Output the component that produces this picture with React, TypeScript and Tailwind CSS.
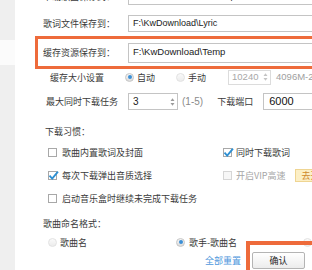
import React from 'react';

const cjk = "font-['Noto_Sans_CJK_SC',sans-serif]";
const lat = "font-['Liberation_Sans','Noto_Sans_CJK_SC',sans-serif]";

function Radio({ on, faint }: { on?: boolean; faint?: boolean }) {
  return (
    <span
      className={`flex h-[9px] w-[9px] shrink-0 items-center justify-center rounded-full border ${
        faint ? 'border-[#e2e2e2] from-[#fafafa] to-[#ececec]' : 'border-[#c6c6c6] from-[#f6f6f6] to-[#dcdcdc]'
      } bg-gradient-to-b`}
    >
      {on && <span className="h-[4px] w-[4px] rounded-full bg-[#3b8fd6]" />}
    </span>
  );
}

function Check({ on, disabled }: { on?: boolean; disabled?: boolean }) {
  return (
    <span
      className={`relative h-[9px] w-[9px] shrink-0 border ${
        disabled ? 'border-[#d6d6d6] bg-[#f7f7f7]' : 'border-[#a8a8a8] bg-white'
      }`}
    >
      {on && (
        <svg className="absolute left-[-1px] top-[-2px]" width="11" height="11" viewBox="0 0 11 11">
          <path d="M1.5 5.6 L4.2 8.6 L10 1.6" stroke="#2d8fd2" strokeWidth="1.8" fill="none" />
        </svg>
      )}
    </span>
  );
}

function Spin({ color }: { color: string }) {
  return (
    <svg width="5" height="10" viewBox="0 0 5 10">
      <path d="M0.5 4 L2.5 1.2 L4.5 4 Z M0.5 6 L2.5 8.8 L4.5 6 Z" fill={color} />
    </svg>
  );
}

const label = `${cjk} text-[9px] leading-none text-[#3a3a3a] whitespace-nowrap`;

export default function App() {
  return (
    <div className="relative flex h-[270px] w-[312px] overflow-hidden bg-white">
      <div className="flex w-[15px] shrink-0 flex-col bg-[#efefef]">
        <div className="h-[40px]" />
        <div className="h-[25px] bg-[#fbfbfb]" />
      </div>

      <div className="mt-[-12px] flex min-w-0 flex-1 flex-col">
        {/* download path */}
        <div className="flex h-[17px] shrink-0 items-center pl-[28px]">
          <span className={`${label} w-[85px] shrink-0`}>下载歌曲保存到：</span>
          <div className={`${lat} flex h-[17px] w-[200px] shrink-0 items-center border border-[#c4c4c4] pl-[4px] text-[9px] text-[#222]`}>
            {'C:\\Users\\Lenovo\\Desktop'}
          </div>
        </div>

        <div className="mt-[10px] flex h-[17px] shrink-0 items-center pl-[28px]">
          <span className={`${label} w-[85px] shrink-0`}>歌词文件保存到：</span>
          <div className={`${lat} flex h-[17px] w-[200px] shrink-0 items-center border border-[#c4c4c4] pl-[4px] text-[9px] text-[#222]`}>
            {'F:\\KwDownload\\Lyric'}
          </div>
        </div>

        {/* highlighted cache row */}
        <div className="ml-[20px] mt-[4px] flex h-[33px] w-[300px] shrink-0 items-center border-[3px] border-[#ee6b3b] pl-[5px]">
          <span className={`${label} w-[85px] shrink-0`}>缓存资源保存到：</span>
          <div className={`${lat} flex h-[20px] w-[200px] shrink-0 items-center border border-[#c4c4c4] pl-[4px] text-[9.5px] text-[#222]`}>
            {'F:\\KwDownload\\Temp'}
          </div>
        </div>

        {/* cache size */}
        <div className="flex h-[16px] shrink-0 items-center pl-[35px]">
          <span className={`${label} w-[75px] shrink-0`}>缓存大小设置</span>
          <Radio on />
          <span className={`${label} ml-[3px]`}>自动</span>
          <span className="ml-[21px]">
            <Radio faint />
          </span>
          <span className={`${label} ml-[3px]`}>手动</span>
          <div className={`${lat} ml-[22px] flex h-[15px] w-[43px] shrink-0 items-center justify-between border border-[#dcdcdc] pl-[3px] pr-[2px] text-[9.5px] text-[#a8a8a8]`}>
            <span>10240</span>
            <Spin color="#c4c4c4" />
          </div>
          <span className={`${lat} ml-[5px] whitespace-nowrap text-[9.5px] text-[#a0a0a0]`}>4096M-20480M</span>
        </div>

        {/* max tasks / port */}
        <div className="mt-[8px] flex h-[17px] shrink-0 items-center pl-[31px]">
          <span className={`${label} w-[82px] shrink-0`}>最大同时下载任务</span>
          <div className={`${lat} flex h-[17px] w-[50px] shrink-0 items-center justify-between border border-[#c4c4c4] pl-[4px] pr-[2px] text-[10px] text-[#222]`}>
            <span>3</span>
            <Spin color="#9a9a9a" />
          </div>
          <span className={`${lat} ml-[4px] whitespace-nowrap text-[10px] text-[#8a8a8a]`}>(1-5)</span>
          <span className={`${label} ml-[14px]`}>下载端口</span>
          <div className={`${lat} ml-[10px] flex h-[17px] w-[60px] shrink-0 items-center border border-[#c4c4c4] pl-[5px] text-[11px] text-[#111]`}>
            6000
          </div>
        </div>

        {/* download habits */}
        <div className="mt-[15px] flex h-[12px] shrink-0 items-center pl-[30px]">
          <span className={label}>下载习惯：</span>
        </div>

        <div className="mt-[4px] flex shrink-0 flex-col pl-[33px]">
          <div className="flex h-[23px] items-center">
            <div className="flex w-[175px] shrink-0 items-center gap-[5px]">
              <Check />
              <span className={label}>歌曲内置歌词及封面</span>
            </div>
            <div className="flex items-center gap-[4px]">
              <Check on />
              <span className={label}>同时下载歌词</span>
            </div>
          </div>
          <div className="flex h-[23px] items-center">
            <div className="flex w-[175px] shrink-0 items-center gap-[5px]">
              <Check on />
              <span className={label}>每次下载弹出音质选择</span>
            </div>
            <div className="flex items-center gap-[4px]">
              <Check disabled />
              <span className={`${cjk} whitespace-nowrap text-[9px] leading-none text-[#a6a6a6]`}>开启VIP高速</span>
              <span className={`${cjk} ml-[5px] flex h-[13px] items-center whitespace-nowrap border border-[#efd592] bg-[#fcefc6] px-[6px] text-[9px] leading-none text-[#d08a2c]`}>
                去开通
              </span>
            </div>
          </div>
          <div className="flex h-[23px] items-center">
            <div className="flex items-center gap-[5px]">
              <Check />
              <span className={label}>启动音乐盒时继续未完成下载任务</span>
            </div>
          </div>
        </div>

        {/* naming */}
        <div className="mt-[7px] flex h-[12px] shrink-0 items-center pl-[28px]">
          <span className={label}>歌曲命名格式：</span>
        </div>
        <div className="mt-[7px] flex h-[12px] shrink-0 items-center pl-[33px]">
          <div className="flex w-[128px] shrink-0 items-center gap-[3px]">
            <Radio faint />
            <span className={label}>歌曲名</span>
          </div>
          <div className="flex shrink-0 items-center gap-[4px]">
            <Radio on />
            <span className={label}>歌手-歌曲名</span>
          </div>
          <span className="ml-[66px]">
            <Radio faint />
          </span>
        </div>

        {/* actions */}
        <div className="mt-[4px] flex h-[17px] shrink-0 items-center pl-[190px]">
          <span className={`${cjk} w-[37px] shrink-0 whitespace-nowrap text-[9px] leading-none text-[#4f97dc]`}>全部重置</span>
          <button className={`${cjk} ml-[10px] flex h-[17px] w-[53px] shrink-0 items-center justify-center rounded-[2px] border border-[#b4b4b4] bg-gradient-to-b from-[#ffffff] to-[#ececec] text-[9px] leading-none text-[#222]`}>
            确认
          </button>
        </div>
      </div>

      {/* annotation box */}
      <div className="absolute left-[246px] top-[241px] h-[40px] w-[80px] border-[4px] border-[#ee6b3b]" />
    </div>
  );
}
